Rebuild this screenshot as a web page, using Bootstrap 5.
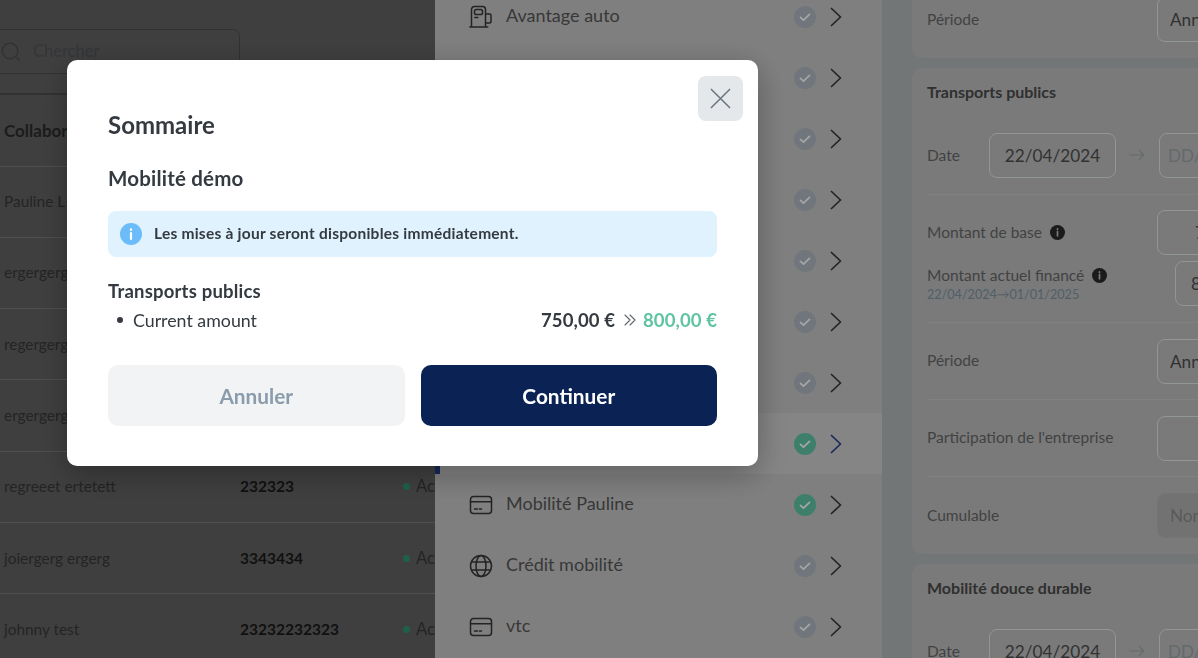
<!DOCTYPE html>
<html lang="fr">
<head>
    <meta charset="UTF-8">
    <meta name="viewport" content="width=device-width, initial-scale=1.0">
    <title>Sommaire</title>
    <link href="https://cdn.jsdelivr.net/npm/bootstrap@5.3.2/dist/css/bootstrap.min.css" rel="stylesheet">
    <style>
        html, body { height: 658px; overflow: hidden; }
        body { font-family: "Lato", "Noto Sans", sans-serif; color: #343a40; background: #c4c4c4; }

        .page-shell { height: 658px; overflow: hidden; }

        /* colonne collaborateurs */
        .staff-pane { width: 435px; flex: none; overflow: hidden; background: #626262; }
        .staff-search { width: 260px; height: 45px; margin: 29px 0 19px -20px; border: 1px solid #4d4d4d; border-radius: 7px; padding-left: 20px; color: #505357; font-size: 16.5px; }
        .staff-search svg { margin-right: 12px; flex: none; }
        .staff-table { width: 480px; table-layout: fixed; border-top: 2px solid #4d4d4d; margin: 0; }
        .staff-table th, .staff-table td { padding: 0 0 0 4px; vertical-align: middle; height: 71.3px; border-color: #7b7b7b; color: #383838; font-size: 15.4px; font-weight: 400; background: transparent; }
        .staff-table th { font-size: 17px; font-weight: 700; height: 72px; color: #2c2c2c; }
        .staff-table td.staff-num { font-size: 15.5px; font-weight: 700; color: #1a1a1a; padding-left: 0; }
        .staff-table td.staff-state { font-size: 16.5px; }
        .staff-col-name { width: 240px; }
        .staff-col-num { width: 158px; }
        .status-dot { display: inline-block; width: 7px; height: 7px; border-radius: 50%; background: #2f9474; margin: 0 6px 0 1px; vertical-align: 2px; }

        /* liste des avantages */
        .perks-pane { width: 447px; flex: none; overflow: hidden; background: #c4c4c4; }
        .perks-list { margin-top: -14px; }
        .perk-row { height: 61px; padding: 0 40px 0 34px; border: 0; border-radius: 0 !important; background: transparent; font-size: 18px; color: #565656; }
        .perk-row.is-open { background: #cdcdcd; border-left: 5px solid #20408a; padding-left: 29px; }
        .perk-row svg.perk-icon { width: 24px; height: 24px; margin-right: 13px; flex: none; color: #363636; }
        .perk-name { flex: 1; margin-bottom: 2px; }
        .perk-check { width: 22px; height: 22px; margin-right: 14px; flex: none; }
        .perk-check.is-idle { color: #adb5bd; }
        .perk-check.is-done { color: #5fc4a4; }
        .perk-chevron { width: 12px; height: 20px; flex: none; color: #363636; }
        .is-open .perk-chevron { color: #20408a; }

        /* colonne details */
        .detail-pane { flex: 1; overflow: hidden; background: #afb5b5; padding-left: 30px; }
        .detail-scroll { width: 420px; margin-top: -19px; }
        .detail-card { background: #bcbcbc; border: 0; border-radius: 10px; margin-bottom: 10px; padding: 0 15px; }
        .detail-title { font-size: 16px; font-weight: 700; color: #4a4a4a; margin: 0; padding-top: 14px; height: 65px; }
        .detail-line { display: flex; align-items: center; height: 77px; border-bottom: 1px solid #c6c6c6; font-size: 15.5px; color: #666; }
        .detail-line:last-child { border-bottom: 0; }
        .detail-line.is-date { height: 62px; align-items: flex-start; }
        .detail-label { width: 230px; flex: none; }
        .detail-label-sm { width: 62px; flex: none; line-height: 45px; }
        .detail-input { height: 45px; border: 1px solid #dfe6e6; border-radius: 8px; background: #bcbcbc; font-size: 17.2px; color: #4d4d4d; padding: 0 12px; box-shadow: none; width: 180px; flex: none; }
        .detail-input.is-date-input { width: 127px; text-align: center; padding: 0; }
        .detail-input.is-empty { width: 120px; font-size: 17px; padding: 0 8px; }
        .detail-input.is-empty::placeholder { color: #9aa2a6; }
        .detail-input[disabled] { background: #b0b0b0; color: #8a8a8a; border-color: #b4b4b4; }
        .detail-input.is-base { padding-left: 37px; }
        .detail-input.is-current { padding-left: 15px; }
        .detail-arrow { width: 16px; height: 12px; margin: 16px 14px 0 13px; color: #9aa2a6; flex: none; }
        .hint-dot { width: 15px; height: 15px; margin-left: 4px; vertical-align: -2px; }
        .amount-stack { border-bottom: 1px solid #c6c6c6; height: 128px; padding-top: 15px; }
        .amount-line { display: flex; align-items: center; height: 45px; font-size: 15.5px; color: #666; }
        .amount-line + .amount-line { margin-top: 6px; }
        .amount-label { width: 248px; flex: none; line-height: 20px; }
        .amount-date { font-size: 12.6px; color: #7b92a1; line-height: 1; margin-top: 4px; }

        /* fond + fenetre */
        .backdrop-layer { position: fixed; inset: 0; background: rgba(0,0,0,.35); padding: 60px 0 0 67px; }
        .summary-box { width: 691px; height: 406px; border: 0; border-radius: 10px; padding: 0 41px; position: relative; background: #fff; box-shadow: 0 8px 32px rgba(0,0,0,.3); color: #343a40; }
        .summary-close { position: absolute; top: 16px; right: 15px; width: 45px; height: 45px; padding: 0; border: 0; border-radius: 8px; background: #e5e8eb; display: flex; align-items: center; justify-content: center; }
        .summary-title { font-size: 24px; font-weight: 700; margin: 50px 0 0; line-height: 30px; height: 30px; }
        .summary-sub { font-size: 20.5px; letter-spacing: .2px; font-weight: 700; margin: 25px 0 0; line-height: 26px; }
        .summary-alert { height: 46px; margin: 20px 0 0; padding: 0 12px; border: 0; border-radius: 8px; background: #dff2fd; font-size: 15.5px; letter-spacing: .24px; font-weight: 700; color: #343a40; }
        .summary-alert svg { width: 22px; height: 22px; margin-right: 12px; flex: none; }
        .summary-group { font-size: 18.5px; letter-spacing: .2px; font-weight: 700; margin: 23px 0 0; line-height: 22px; }
        .summary-item { font-size: 17.8px; line-height: 24px; margin-top: 6px; }
        .summary-bullet { width: 6px; height: 6px; border-radius: 50%; background: #343a40; margin: 0 10px 0 9px; flex: none; }
        .summary-old { font-weight: 700; font-size: 18.5px; letter-spacing: .1px; }
        .summary-arrows { width: 12px; height: 12px; margin: 0 7px 0 9px; color: #5e6469; }
        .summary-new { font-weight: 700; font-size: 18.5px; letter-spacing: .1px; color: #5fc4a4; }
        .summary-actions { margin-top: 33px; gap: 16px; }
        .summary-btn { flex: 1; height: 61px; border: 0; border-radius: 10px; font-size: 20.8px; font-weight: 700; }
        .summary-btn.is-cancel { background: #f1f3f5; color: #8a9cab; }
        .summary-btn.is-go { background: #0a2254; color: #fff; }
    </style>
</head>
<body>

<svg width="0" height="0" class="d-block">
    <symbol id="i-card" viewBox="0 0 24 24" fill="none" stroke="currentColor" stroke-width="1.5" stroke-linecap="round">
        <rect x="1.5" y="3.5" width="21" height="17" rx="3"/><path d="M1.5 8.8h21M5.5 16h3M10.5 16h2"/>
    </symbol>
    <symbol id="i-globe" viewBox="0 0 24 24" fill="none" stroke="currentColor" stroke-width="1.5">
        <circle cx="12" cy="12" r="10.5"/><ellipse cx="12" cy="12" rx="5" ry="10.5"/><path d="M2.5 8h19M2.5 16h19"/>
    </symbol>
    <symbol id="i-pump" viewBox="0 0 24 24" fill="none" stroke="currentColor" stroke-width="1.5" stroke-linecap="round" stroke-linejoin="round">
        <path d="M2.500 22V4.500a3 3 0 0 1 3-3h8a3 3 0 0 1 3 3V22M.8 22h18M16.500 9h4a1.500 1.500 0 0 1 1.500 1.500v6a1.500 1.500 0 0 1-1.500 1.500h-4"/>
        <rect x="5.500" y="4.500" width="8" height="5" rx="1.800"/><path d="M5.800 12.500h3"/>
    </symbol>
    <symbol id="i-check-ok" viewBox="0 0 22 22">
        <circle cx="11" cy="11" r="11" fill="currentColor"/><path d="M6.500 11.300l3 2.900 6-5.800" fill="none" stroke="#fff" stroke-width="1.700" stroke-linecap="round" stroke-linejoin="round"/>
    </symbol>
    <symbol id="i-chevron" viewBox="0 0 12 20">
        <path d="M1.500 1.500L10.500 10 1.500 18.500" fill="none" stroke="currentColor" stroke-width="1.700" stroke-linecap="round" stroke-linejoin="round"/>
    </symbol>
    <symbol id="i-hint" viewBox="0 0 16 16">
        <circle cx="8" cy="8" r="8" fill="#2a2a2a"/><path d="M8 7v4.500M8 4.200v.6" stroke="#bcbcbc" stroke-width="1.800" stroke-linecap="round"/>
    </symbol>
    <symbol id="i-arrow" viewBox="0 0 16 12">
        <path d="M.7 6h14M10 1.200L14.700 6 10 10.800" fill="none" stroke="currentColor" stroke-width="1.200" stroke-linecap="round" stroke-linejoin="round"/>
    </symbol>
</svg>

<div class="page-shell d-flex">

    <!-- colonne collaborateurs -->
    <section class="staff-pane">
        <div class="staff-search d-flex align-items-center">
            <svg width="20" height="20" viewBox="0 0 20 20" fill="none" stroke="#4d4d4d" stroke-width="1.400"><circle cx="9" cy="9" r="7.700"/><path d="M14.800 14.800L19 19"/></svg>
            <span>Chercher</span>
        </div>
        <table class="table staff-table">
            <thead><tr><th class="staff-col-name">Collaborateur</th><th class="staff-col-num"></th><th></th></tr></thead>
            <tbody>
                <tr><td>Pauline L</td><td class="staff-num"></td><td class="staff-state"><span class="status-dot"></span>Actif</td></tr>
                <tr><td>ergergerg</td><td class="staff-num"></td><td class="staff-state"><span class="status-dot"></span>Actif</td></tr>
                <tr><td>regergerg</td><td class="staff-num"></td><td class="staff-state"><span class="status-dot"></span>Actif</td></tr>
                <tr><td>ergergerg</td><td class="staff-num"></td><td class="staff-state"><span class="status-dot"></span>Actif</td></tr>
                <tr><td>regreeet ertetett</td><td class="staff-num">232323</td><td class="staff-state"><span class="status-dot"></span>Actif</td></tr>
                <tr><td>joiergerg ergerg</td><td class="staff-num">3343434</td><td class="staff-state"><span class="status-dot"></span>Actif</td></tr>
                <tr><td>johnny test</td><td class="staff-num">23232232323</td><td class="staff-state"><span class="status-dot"></span>Actif</td></tr>
            </tbody>
        </table>
    </section>

    <!-- liste des avantages -->
    <section class="perks-pane">
        <div class="list-group perks-list">
            <div class="list-group-item perk-row d-flex align-items-center"><svg class="perk-icon"><use href="#i-pump"/></svg><span class="perk-name">Avantage auto</span><svg class="perk-check is-idle"><use href="#i-check-ok"/></svg><svg class="perk-chevron"><use href="#i-chevron"/></svg></div>
            <div class="list-group-item perk-row d-flex align-items-center"><span class="perk-name"></span><svg class="perk-check is-idle"><use href="#i-check-ok"/></svg><svg class="perk-chevron"><use href="#i-chevron"/></svg></div>
            <div class="list-group-item perk-row d-flex align-items-center"><span class="perk-name"></span><svg class="perk-check is-idle"><use href="#i-check-ok"/></svg><svg class="perk-chevron"><use href="#i-chevron"/></svg></div>
            <div class="list-group-item perk-row d-flex align-items-center"><span class="perk-name"></span><svg class="perk-check is-idle"><use href="#i-check-ok"/></svg><svg class="perk-chevron"><use href="#i-chevron"/></svg></div>
            <div class="list-group-item perk-row d-flex align-items-center"><span class="perk-name"></span><svg class="perk-check is-idle"><use href="#i-check-ok"/></svg><svg class="perk-chevron"><use href="#i-chevron"/></svg></div>
            <div class="list-group-item perk-row d-flex align-items-center"><span class="perk-name"></span><svg class="perk-check is-idle"><use href="#i-check-ok"/></svg><svg class="perk-chevron"><use href="#i-chevron"/></svg></div>
            <div class="list-group-item perk-row d-flex align-items-center"><span class="perk-name"></span><svg class="perk-check is-idle"><use href="#i-check-ok"/></svg><svg class="perk-chevron"><use href="#i-chevron"/></svg></div>
            <div class="list-group-item perk-row is-open d-flex align-items-center"><span class="perk-name"></span><svg class="perk-check is-done"><use href="#i-check-ok"/></svg><svg class="perk-chevron"><use href="#i-chevron"/></svg></div>
            <div class="list-group-item perk-row d-flex align-items-center"><svg class="perk-icon"><use href="#i-card"/></svg><span class="perk-name">Mobilité Pauline</span><svg class="perk-check is-done"><use href="#i-check-ok"/></svg><svg class="perk-chevron"><use href="#i-chevron"/></svg></div>
            <div class="list-group-item perk-row d-flex align-items-center"><svg class="perk-icon"><use href="#i-globe"/></svg><span class="perk-name">Crédit mobilité</span><svg class="perk-check is-idle"><use href="#i-check-ok"/></svg><svg class="perk-chevron"><use href="#i-chevron"/></svg></div>
            <div class="list-group-item perk-row d-flex align-items-center"><svg class="perk-icon"><use href="#i-card"/></svg><span class="perk-name">vtc</span><svg class="perk-check is-idle"><use href="#i-check-ok"/></svg><svg class="perk-chevron"><use href="#i-chevron"/></svg></div>
        </div>
    </section>

    <!-- colonne details -->
    <section class="detail-pane">
        <div class="detail-scroll">
            <div class="card detail-card">
                <div class="detail-line"><span class="detail-label">Période</span><input class="form-control detail-input" value="Annuel"></div>
            </div>
            <div class="card detail-card">
                <h3 class="detail-title">Transports publics</h3>
                <div class="detail-line is-date"><span class="detail-label-sm">Date</span><input class="form-control detail-input is-date-input" value="22/04/2024"><svg class="detail-arrow"><use href="#i-arrow"/></svg><input class="form-control detail-input is-empty" placeholder="DD/MM/YYYY"></div>
                <div class="amount-stack">
                    <div class="amount-line"><span class="detail-label">Montant de base <svg class="hint-dot"><use href="#i-hint"/></svg></span><input class="form-control detail-input is-base" value="750,00 €"></div>
                    <div class="amount-line"><div class="amount-label"><div>Montant actuel financé <svg class="hint-dot"><use href="#i-hint"/></svg></div><div class="amount-date">22/04/2024→01/01/2025</div></div><input class="form-control detail-input is-current" value="800,00 €"></div>
                </div>
                <div class="detail-line"><span class="detail-label">Période</span><input class="form-control detail-input" value="Annuel"></div>
                <div class="detail-line"><span class="detail-label">Participation de l'entreprise</span><input class="form-control detail-input"></div>
                <div class="detail-line"><span class="detail-label">Cumulable</span><input class="form-control detail-input" value="Non" disabled></div>
            </div>
            <div class="card detail-card">
                <h3 class="detail-title">Mobilité douce durable</h3>
                <div class="detail-line is-date"><span class="detail-label-sm">Date</span><input class="form-control detail-input is-date-input" value="22/04/2024"><svg class="detail-arrow"><use href="#i-arrow"/></svg><input class="form-control detail-input is-empty" placeholder="DD/MM/YYYY"></div>
            </div>
        </div>
    </section>
</div>

<!-- fenetre Sommaire -->
<div class="backdrop-layer">
    <div class="modal-content summary-box">
        <button type="button" class="summary-close" aria-label="Fermer">
            <svg width="21" height="21" viewBox="0 0 22 22" fill="none" stroke="#6c757d" stroke-width="1.600" stroke-linecap="round"><path d="M1.500 1.500l19 19M20.500 1.500l-19 19"/></svg>
        </button>
        <h2 class="summary-title">Sommaire</h2>
        <h3 class="summary-sub">Mobilité démo</h3>
        <div class="alert summary-alert d-flex align-items-center">
            <svg viewBox="0 0 22 22"><circle cx="11" cy="11" r="11" fill="#6cbcf9"/><path d="M11 10v6M11 6.300v.6" stroke="#fff" stroke-width="2.200" stroke-linecap="round"/></svg>
            Les mises à jour seront disponibles immédiatement.
        </div>
        <div class="summary-group">Transports publics</div>
        <div class="summary-item d-flex align-items-center">
            <span class="summary-bullet"></span>
            <span>Current amount</span>
            <span class="summary-old ms-auto">750,00 €</span>
            <svg class="summary-arrows" viewBox="0 0 12 12" fill="none" stroke="currentColor" stroke-width="1.100" stroke-linecap="round" stroke-linejoin="round"><path d="M1 1l5 5-5 5M6 1l5 5-5 5"/></svg>
            <span class="summary-new">800,00 €</span>
        </div>
        <div class="summary-actions d-flex">
            <button type="button" class="btn summary-btn is-cancel">Annuler</button>
            <button type="button" class="btn summary-btn is-go">Continuer</button>
        </div>
    </div>
</div>

<script src="https://cdn.jsdelivr.net/npm/bootstrap@5.3.2/dist/js/bootstrap.bundle.min.js"></script>
</body>
</html>
